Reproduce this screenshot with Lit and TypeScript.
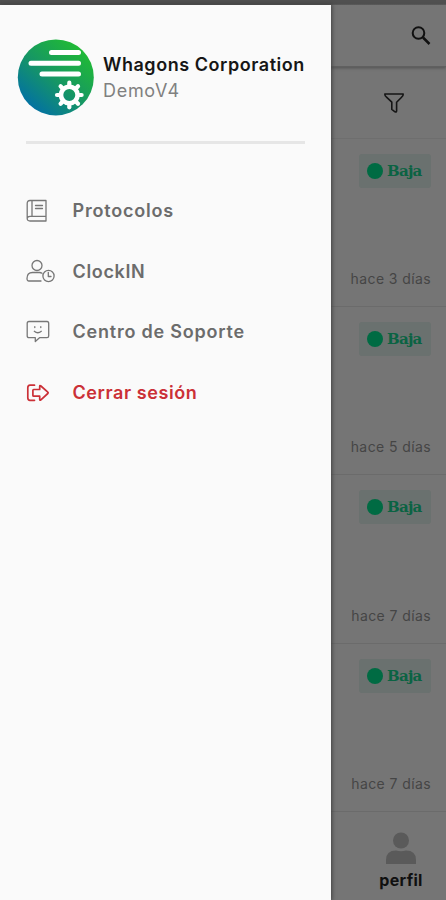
import { LitElement, html, css, svg } from "lit";
import { customElement, property } from "lit/decorators.js";

const icons: Record<string, unknown> = {
  book: svg`<path d="M4 1.5H20V22H4Q1.2 22 1.2 19.5V4.5Q1.2 1.5 4 1.5ZM1.2 19.5Q1.2 17.3 4 17.3H20M6 1.5V17.3M9.5 6.5H16.5M9.5 9.5H16.5"/>`,
  clock: svg`<circle cx="11" cy="6.5" r="5"/><path d="M15 22H3Q1 22 1 19.5Q1 13.5 6.5 13.5H13.5Q15 13.5 16 14.2"/><circle cx="22.5" cy="17" r="5.6"/><path d="M22.3 13.5V17.5H25"/>`,
  chat: svg`<path d="M3 1.5H21Q22.7 1.5 22.7 3.5V16Q22.7 17.7 21 17.7H13.5L9.3 21.5V17.7H3Q1.2 17.7 1.2 16V3.5Q1.2 1.5 3 1.5Z"/><path d="M8.8 6.7V7.6M14.8 6.7V7.6M8.3 11.3Q11.8 14.2 15.3 11.3"/>`,
  exit: svg`<path d="M8.5 4.2H4Q1.8 4.2 1.8 6.7V16.8Q1.8 19.3 4 19.3H8.5M6.9 9.3Q6.9 8.5 7.7 8.5H13.7V5.5Q13.7 3.9 14.9 5L21.8 11.2Q22.5 11.8 21.8 12.5L14.9 18.8Q13.7 19.8 13.7 18.2V15.2H7.7Q6.9 15.2 6.9 14.4Z"/>`,
};

@customElement("menu-item")
class MenuItem extends LitElement {
  @property() icon = "";
  @property() label = "";
  @property() spacing = "0";
  static styles = css`
    :host { display: flex; align-items: center; height: 60.6px; color: #6c6c6c; }
    :host([danger]) { color: #cb3037; }
    svg { width: 30px; height: 24px; margin-right: 16.5px; fill: none; stroke: #777; stroke-width: 1.3; stroke-linejoin: round; stroke-linecap: round; flex: none; }
    :host([danger]) svg { stroke: currentColor; stroke-width: 1.7; }
    span { font: 600 18px/24px Inter, sans-serif; white-space: nowrap; margin-top: 1px; }
  `;
  render() {
    return html`<svg viewBox="0 0 30 24">${icons[this.icon]}</svg><span style="letter-spacing:${this.spacing}px">${this.label}</span>`;
  }
}

@customElement("task-card")
class TaskCard extends LitElement {
  @property() when = "";
  static styles = css`
    :host { display: flex; flex-direction: column; justify-content: space-between; align-items: flex-end; height: 168.2px; box-sizing: border-box; border-bottom: 1px solid #6b6b6b; padding: 15px 15px 16px 0; }
    .tag { display: flex; align-items: center; gap: 4px; width: 72px; height: 34px; box-sizing: border-box; padding-left: 8px; border-radius: 3px; background: #6a716f; color: #0b6343; }
    .tag b { font: 700 15px/34px "DejaVu Serif", serif; letter-spacing: -0.75px; }
    .dot { width: 16px; height: 16px; border-radius: 50%; background: #006b43; flex: none; }
    .when { font: 400 14px/22px Inter, sans-serif; letter-spacing: 0.4px; color: #454545; white-space: nowrap; }
  `;
  render() {
    return html`<div class="tag"><i class="dot"></i><b>Baja</b></div><div class="when">${this.when}</div>`;
  }
}

@customElement("app-root")
class AppRoot extends LitElement {
  static styles = css`
    :host { display: block; position: relative; width: 446px; height: 900px; overflow: hidden; background: #757575; font-family: Inter, sans-serif; }
    .status { height: 5px; background: linear-gradient(#505050 70%, #606060); }
    .bar { height: 62px; display: flex; justify-content: flex-end; align-items: center; padding-right: 13px; box-sizing: border-box; border-bottom: 1px solid #606060; box-shadow: 0 1px 3px #505050; }
    .filter { height: 72px; display: flex; justify-content: flex-end; align-items: center; padding-right: 40px; box-sizing: border-box; border-bottom: 1px solid #6e6e6e; }
    .tab { width: 90px; margin-left: auto; padding-top: 20px; display: flex; flex-direction: column; align-items: center; color: #101010; font: 700 16px/22px Inter, sans-serif; letter-spacing: 0.3px; }
    svg { display: block; }
    .tab span { margin-top: 4px; }
    .drawer { position: absolute; left: 0; top: 5px; bottom: 0; width: 331px; background: #fafafa; box-shadow: 0 0 4px 1px #404040; }
    .head { display: flex; padding: 34px 0 0 17px; gap: 9px; }
    .name { font: 600 18px/26px Inter, sans-serif; color: #161616; white-space: nowrap; margin-top: 13px; letter-spacing: 0.55px; }
    .org { font: 400 18px/26px Inter, sans-serif; color: #808080; letter-spacing: 0.7px; }
    .rule { height: 3px; margin: 25px 26px 0; background: #e6e6e6; }
    nav { padding: 36.5px 0 0 26px; }
  `;
  render() {
    const teeth = [0, 45, 90, 135, 180, 225, 270, 315];
    return html`
      <div class="status"></div>
      <div class="bar"><svg width="24" height="24" viewBox="0 0 24 24" fill="none" stroke="#111" stroke-width="2"><circle cx="9.5" cy="9" r="5.8"/><path d="M14 13.5L20.5 20" stroke-width="2.5"/></svg></div>
      <div class="filter"><svg width="24" height="24" viewBox="0 0 24 24" fill="none" stroke="#151515" stroke-width="1.6" stroke-linejoin="round"><path d="M2.8 3H21.2Q21.3 5 19.6 6.2L14.6 11.2V20Q14.5 21.5 13 20.8L9.8 18.4V11.2L4.5 6.2Q2.8 5 2.8 3Z"/></svg></div>
      ${["hace 3 días", "hace 5 días", "hace 7 días", "hace 7 días"].map((w) => html`<task-card .when=${w}></task-card>`)}
      <div class="tab"><svg width="30" height="33" viewBox="0 0 30 33" fill="#5a5a5a"><circle cx="15" cy="8.5" r="8"/><path d="M0 32V28Q0 18.5 10 18.5Q15 20 20 18.5Q30 18.5 30 28V32Z"/></svg><span>perfil</span></div>
      <aside class="drawer">
        <div class="head">
          <svg width="77" height="77" viewBox="0 0 77 77">
            <defs><linearGradient id="g" x1="0.15" y1="0.95" x2="0.85" y2="0.15"><stop offset="0" stop-color="#006daa"/><stop offset="0.5" stop-color="#169665"/><stop offset="1" stop-color="#20b936"/></linearGradient></defs>
            <circle cx="38.8" cy="38.4" r="38" fill="url(#g)"/>
            <path d="M34.5 13.5H61.5M14 24.3H61.5M25 35H61.5" stroke="#fff" stroke-width="5" stroke-linecap="round"/>
            <g transform="translate(52.3 56)"><circle r="8.3" fill="none" stroke="#fff" stroke-width="4.6"/>
            ${teeth.map((a) => svg`<path d="M0 -10V-12.3" stroke="#fff" stroke-width="4.2" stroke-linecap="round" transform="rotate(${a})"/>`)}</g>
          </svg>
          <div><div class="name">Whagons Corporation</div><div class="org">DemoV4</div></div>
        </div>
        <div class="rule"></div>
        <nav>
          <menu-item icon="book" label="Protocolos" spacing="0.8"></menu-item>
          <menu-item icon="clock" label="ClockIN" spacing="0.65"></menu-item>
          <menu-item icon="chat" label="Centro de Soporte" spacing="0.78"></menu-item>
          <menu-item danger icon="exit" label="Cerrar sesión" spacing="0.58"></menu-item>
        </nav>
      </aside>`;
  }
}
